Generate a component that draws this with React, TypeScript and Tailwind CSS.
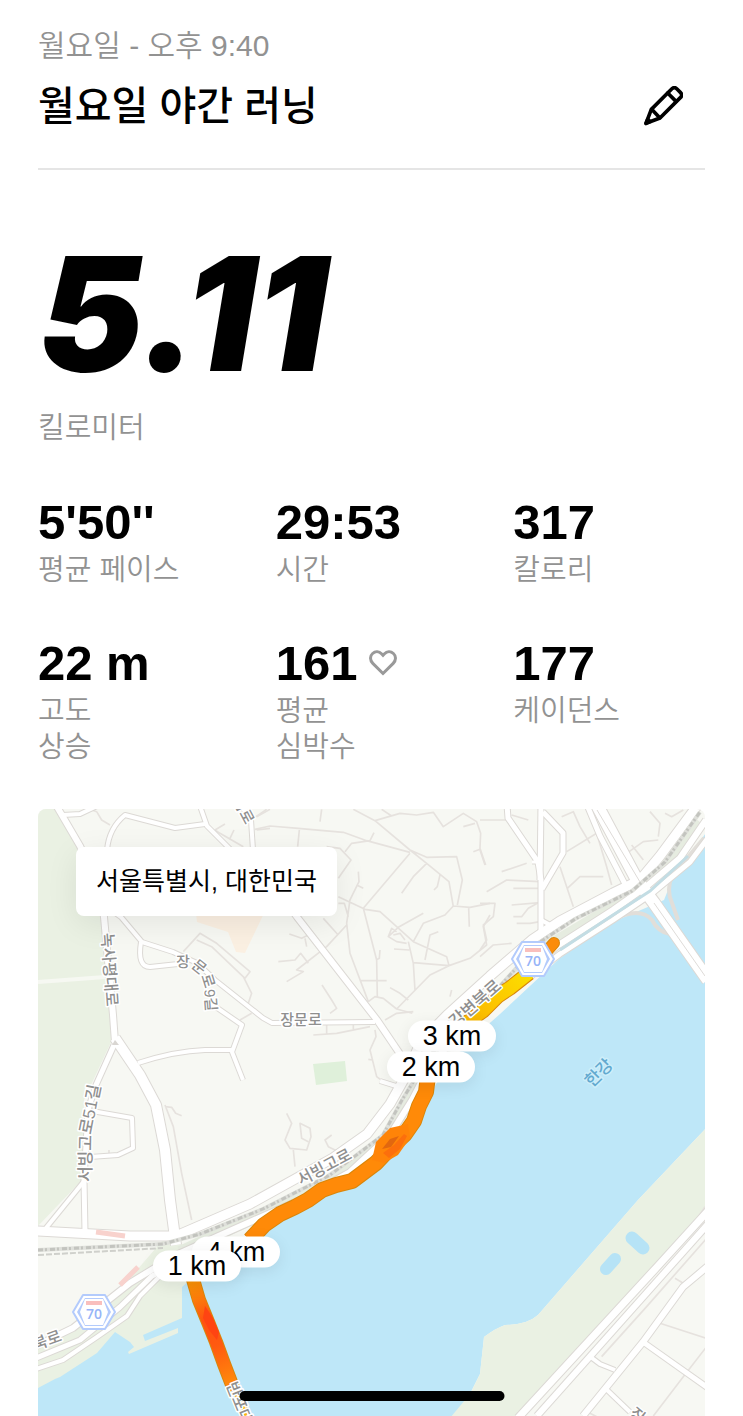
interface Stat {
  value: string;
  label: string[];
  heart?: boolean;
}

interface Road {
  d: string;
  w: number;
}

interface Pin {
  label: string;
  x: number;
  y: number;
}

const STATS: Stat[] = [
  { value: "5'50''", label: ["평균 페이스"] },
  { value: "29:53", label: ["시간"] },
  { value: "317", label: ["칼로리"] },
  { value: "22 m", label: ["고도", "상승"] },
  { value: "161", label: ["평균", "심박수"], heart: true },
  { value: "177", label: ["케이던스"] },
];

const MAP = { x: 38, y: 809, width: 667, height: 607 };

const PINS: Pin[] = [
  { label: "3 km", x: 452, y: 1036 },
  { label: "2 km", x: 431, y: 1067 },
  { label: "4 km", x: 236, y: 1252 },
  { label: "1 km", x: 197, y: 1266 },
];

const ROADS: Road[] = [
  { d: "M56 805 L80 846 L100 890 L104 917 L113 1015 L115 1042", w: 6 },
  { d: "M115 1038 L140 1075 L156 1105 L165 1150 L170 1200 L176 1245", w: 10 },
  { d: "M114 1045 L96 1085 L88 1110 L84 1180 L85 1232", w: 5 },
  { d: "M85 1180 L46 1228", w: 4 },
  { d: "M92 1111 L132 1118 L133 1148 L118 1155 L90 1157", w: 4 },
  { d: "M138 1063 Q175 1051 205 1050 L232 1050", w: 4 },
  { d: "M210 1003 L242 1025 L232 1052 L243 1080", w: 4 },
  { d: "M90 895 L121 917 L142 942 L173 952 L197 963 L215 980 L263 1018 L272 1023 L375 1022", w: 4 },
  { d: "M141 942 Q137 967 150 967 L178 964", w: 4 },
  { d: "M63 815 L80 814 L97 806", w: 4 },
  { d: "M107 850 Q109 828 125 815 L175 828 L205 824", w: 4 },
  { d: "M200 806 L207 826 L233 852", w: 4 },
  { d: "M241 806 L251 820 L253 850", w: 4 },
  { d: "M270 880 L297 917 L377 1020 L400 1054", w: 6 },
  { d: "M507 805 L508 818 L538 862 L541 880 L541 930", w: 5 },
  { d: "M541 805 L540 880", w: 5 },
  { d: "M543 812 L563 833 L563 853 L542 889", w: 5 },
  { d: "M532 862 L540 862", w: 3 },
  { d: "M541 920 L552 926", w: 4 },
  { d: "M380 1081 L396 1086", w: 4 },
  { d: "M587 805 L600 836 L625 884", w: 5 },
  { d: "M597 805 L637 880 L654 903 L708 980", w: 12 },
  { d: "M36 1231 L130 1236 L176 1236 L250 1204 L333 1158 L367 1134 L390 1104 L408 1072 L420 1043 L447 1015 L490 976 L533 939 L560 921 L613 893 L640 880 L660 856 L697 806", w: 9 },
  { d: "M36 1346 L73 1328 L130 1283 L176 1255 L250 1222 L300 1200 L350 1172 L390 1135 L412 1100 L430 1065 L465 1028 L500 996 L557 946 L613 910 L647 886 L680 858 L706 820", w: 6 },
  { d: "M36 1358 L80 1340 L120 1307 L152 1276 L200 1252", w: 5 },
  { d: "M36 1369 L63 1360 L97 1337 L127 1316 L140 1296 L160 1276", w: 4 },
  { d: "M530 977 L560 954 L613 920 L650 895 L690 862 L708 838", w: 5 },
  { d: "M708 1211 L657 1267 L518 1418", w: 7 },
  { d: "M708 1224 L537 1416", w: 6 },
  { d: "M708 1266 L683 1287 L643 1342 L583 1416", w: 6 },
  { d: "M643 1342 L708 1388", w: 5 },
  { d: "M605 1388 L630 1412", w: 4 },
  { d: "M592 1358 L600 1364 L615 1370", w: 4 },
];

const RAILWAY =
  "M38 1250 L163 1244 L200 1234 L263 1209 L330 1175 L383 1135 L402 1100 L430 1055 L500 986 L540 942 L575 919 L632 891 L665 862 L700 812";

/* Side streets, one group per map tile, three units to the pixel. */
const TILES = [
  {
    at: "translate(250 800) scale(0.3333)",
    d: "M15 88 L60 78 L145 85 L280 97 L350 122 L480 157 M0 62 L50 28 M148 90 L143 140 M210 65 L215 28 M310 28 L375 62 L480 150 L530 190 L597 245 L610 320 M375 62 L450 40 L500 45 L550 37 L580 80 L640 40 L680 65 L692 100 L690 145 L707 195 M670 155 L690 148 M640 80 L675 70 M395 28 L425 48 M360 122 L372 98 M230 140 L270 145 L303 180 L265 235 M285 155 L305 130 L360 122 M480 160 L340 325 M480 150 L530 172 L620 170 L637 240 L622 315 M530 190 L490 230 L455 280 M570 225 L562 260 L552 270 M325 215 L327 245 L300 300 L290 370 L300 460 L355 605 M320 255 L340 265 M265 290 L345 328 L390 335 L440 380 L490 425 L590 470 L597 497 L490 488 M265 310 L283 310 L295 350 M340 325 L380 480 L382 590 M610 318 L660 322 L720 310 M656 322 L658 380 M610 318 L585 345 L520 370 L490 425 M520 340 L445 382 L415 410 M440 395 L425 385 L415 410 L440 425 L470 430 M430 405 L450 400 L465 420 M475 425 L490 490 L495 570 M432 447 L478 450 M720 345 L700 380 L710 435 L660 475 L597 497 L540 525 L440 627 L400 595 L375 590 L355 605 M440 627 L487 640 M420 563 L450 580 L475 600 M330 542 L410 542 M378 480 L388 475 L390 450 M290 375 L230 440 L140 510 L160 515 L110 545 M85 485 L135 480 L152 460 L175 490 M118 402 L155 415 L175 405 M165 415 L170 440 M220 355 L262 402 M216 555 L245 600 L260 625 L240 640 M605 570 L600 590 M565 395 L540 405 L525 480",
  },
  {
    at: "translate(480 800) scale(0.3333)",
    d: "M0 60 L80 60 M20 275 L80 240 L180 245 M65 215 L140 190 M100 265 L180 265 M95 315 L180 308 M100 350 L125 350 L145 325 L180 305 M110 370 L150 370 L180 365 M0 310 L45 310 L40 350 L10 375 L20 420 L0 450 M95 45 L145 60 M245 50 L280 35 L300 80 L330 130 M260 155 L350 100 M240 200 L280 320 M262 265 L300 230 L370 230 M350 100 L380 200 L395 255 M510 35 L540 70 L535 110 M555 40 L575 50 L610 30 M380 50 L440 160 L490 125 L535 120 M455 135 L490 180 M0 470 L40 435 L95 430 M0 150 L15 195 M320 28 L350 90",
  },
  {
    at: "translate(30 800) scale(0.3333)",
    d: "M180 28 L200 35 L215 60 L240 75 M555 90 L570 100 L640 140 M555 90 L585 72 M600 115 L612 90 M680 50 L720 28 M680 90 L720 85 M460 455 L510 400 L560 430 L660 515 L645 535 L545 440 L500 420 M640 530 L665 580 L655 610",
  },
  {
    at: "translate(30 1010) scale(0.3333)",
    d: "M405 285 L430 350 L455 490 L485 630 M405 290 L425 292 L437 310 L455 317 M237 420 L237 435 M630 30 L665 10",
  },
  {
    at: "translate(250 1010) scale(0.3333)",
    d: "M110 310 L125 340 L105 390 L120 415 L170 420 L183 380 L180 355 L150 340 L155 385 L175 395 M130 420 L135 470 M245 375 L225 390 L235 410 L275 430 M190 75 L260 70 L360 50 M230 70 L230 40 M310 60 L310 45 M375 60 L378 80 L360 120 L380 200 L400 215 M355 148 L368 150 M405 30 L440 10 L490 5",
  },
  {
    at: "translate(370 1200) scale(0.3333)",
    d: "M1010 115 L830 320 L695 470 M915 235 L940 250 M870 370 L1010 415 M1010 440 L940 530 L850 648 M1005 20 L960 90 L880 170 M660 640 L700 660",
  },
];

const ROUTE = {
  tip: "M554 943 L546 952",
  upper: "M529 973 L510 988 L498 996 L483 1011 L462 1026",
  middle:
    "M428 1076 L426 1092 L419 1106 L414 1121 L405 1134 L393 1145 L376 1163 L364 1172 L352 1181 L336 1185 L322 1190 L308 1200 L295 1207 L280 1214 L264 1225 L250 1240",
  lower: "M192 1276 L199 1300 L208 1322 L216 1342 L224 1364 L234 1390",
};

function PencilIcon() {
  return (
    <svg viewBox="0 0 120 120" className="size-10" fill="none" stroke="#000" strokeWidth="11" strokeLinejoin="round" strokeLinecap="round" aria-hidden="true">
      <path d="M9 112 L25 70 L86 9 Q94 1 102 9 L112 19 Q120 27 112 35 L51 96 Z" />
      <path d="M74 21 L99 46 M26 70 L50 95" />
      <path d="M9 112 L14 100 L21 107 Z" fill="#000" />
    </svg>
  );
}

function HeartIcon() {
  return (
    <svg viewBox="0 0 28 26" className="h-[26px] w-7" fill="none" stroke="#999" strokeWidth="3" strokeLinejoin="miter" aria-hidden="true">
      <path d="M14 23.500 L3.800 13.400 C0.800 10.300 0.800 6 3.600 3.500 C6.400 1 10.200 1.500 12.500 3.800 L14 5.400 L15.500 3.800 C17.800 1.500 21.600 1 24.400 3.500 C27.200 6 27.200 10.300 24.200 13.400 Z" />
    </svg>
  );
}

function Shield({ x, y }: { x: number; y: number }) {
  return (
    <g transform={`translate(${x} ${y})`}>
      <path d="M-11 -17 H11 L21 0 L11 17 H-11 L-21 0 Z" fill="#fff" stroke="#b3cbfc" strokeWidth="2" strokeLinejoin="round" />
      <path d="M-9 -14 H9 L17 0 L9 14 H-9 L-17 0 Z" fill="#b3cbfc" />
      <path d="M-9 -13 H9 L14 0 L9 13 H-9 L-14 0 Z" fill="#fff" />
      <rect x="-8" y="-11" width="16" height="4" fill="#f9bfbd" />
      <text y="7" textAnchor="middle" fontSize="14" fill="#96b4f7" className="font-['Open_Sans',sans-serif] font-semibold">
        70
      </text>
    </g>
  );
}

function RunMap() {
  return (
    <svg
      viewBox={`${MAP.x} ${MAP.y} ${MAP.width} ${MAP.height}`}
      className="block h-auto w-full"
      role="img"
      aria-label="러닝 경로 지도"
    >
      <defs>
        <linearGradient id="upper" gradientUnits="userSpaceOnUse" x1="530" y1="970" x2="455" y2="1035">
          <stop offset="0" stopColor="#fbe000" />
          <stop offset="0.5" stopColor="#fdc500" />
          <stop offset="1" stopColor="#f5ac00" />
        </linearGradient>
        <linearGradient id="lower" gradientUnits="userSpaceOnUse" x1="188" y1="1275" x2="246" y2="1416">
          <stop offset="0" stopColor="#f79a05" />
          <stop offset="0.15" stopColor="#fb7f0a" />
          <stop offset="0.32" stopColor="#ff5210" />
          <stop offset="0.5" stopColor="#ff5a10" />
          <stop offset="0.75" stopColor="#ff870b" />
          <stop offset="1" stopColor="#fbb50a" />
        </linearGradient>
        <path id="alley" d="M176 968 Q199 963 204 986 L206 1012" />
        <path id="lane" d="M91 1182 L92 1130 L101 1084" />
      </defs>

      <rect x="38" y="809" width="667" height="607" fill="#f7f8f3" />
      <path d="M38 809 H56 L80 848 L100 890 L109 1010 L112 1040 L84 1100 L82 1180 L38 1226 Z" fill="#eaf1e3" />
      <path d="M38 982 L105 977" stroke="#f6f8f2" strokeWidth="4" />
      <path d="M195 905 H268 L256 930 L245 953 L236 952 L228 932 L197 922 Z" fill="#fbf0e2" />
      <path d="M313 1064 L345 1061 L347 1081 L316 1085 Z" fill="#dff0da" />

      <path
        d="M708 830 L672 880 L664 900 L613 922 L560 958 L500 1014 L465 1045 L436 1084 L424 1108 L396 1146 L350 1184 L300 1208 L240 1242 L188 1276 L30 1350 V1420 H452 L470 1394 L480 1374 L484 1337 Q496 1328 505 1325 Q527 1325 538 1315 L638 1200 L708 1126 Z"
        fill="#bee7f8"
      />
      <path
        d="M36 1389 L55 1379 L60 1377 L97 1353 L115 1332 L130 1342 L134 1347 L128 1352 L129 1354 L178 1333 V1328 L145 1341 L143 1335 L182 1318 V1287 L190 1280 L165 1262 L120 1290 L36 1340 Z"
        fill="#eaf1e3"
      />
      <path d="M38 1340 L70 1326 L130 1278 L163 1240 L38 1258 Z" fill="#f7f8f3" />
      <path d="M130 1278 L163 1240 L185 1245 L165 1265 Z" fill="#eaf1e3" />
      <path d="M708 1126 L638 1200 L538 1315 Q527 1325 505 1325 Q496 1328 484 1337 L480 1374 L470 1394 L450 1418 H520 L708 1208 Z" fill="#eaf1e3" />
      <path d="M632 1238 L643 1248" stroke="#b6e3f6" strokeWidth="13" strokeLinecap="round" />
      <path d="M615 1259 L606 1269" stroke="#b6e3f6" strokeWidth="12" strokeLinecap="round" />

      <path d="M180 1252 L263 1214 L330 1180 L383 1143 L402 1112 L430 1064 L500 992 L545 948 L632 896 L665 866 L700 822" fill="none" stroke="#e6ece0" strokeWidth="12" />
      <path d="M704 838 L672 876 Q666 890 672 903 L678 920 M612 920 Q640 906 652 920 Q658 932 670 934" fill="none" stroke="#e1ded9" strokeWidth="4" />

      {TILES.map((tile) => (
        <path key={tile.at} transform={tile.at} d={tile.d} fill="none" stroke="#e6e2de" strokeWidth="5" strokeLinejoin="round" />
      ))}

      <g fill="none" stroke="#dcd9d5" strokeLinejoin="round">
        {ROADS.map((road) => (
          <path key={road.d} d={road.d} strokeWidth={road.w + 2} />
        ))}
      </g>
      <g fill="none" stroke="#fff" strokeLinejoin="round">
        {ROADS.map((road) => (
          <path key={road.d} d={road.d} strokeWidth={road.w} />
        ))}
      </g>
      <path d="M597 810 L640 882 M654 903 L705 976" stroke="#dedbd8" fill="none" />
      <path d="M115 1040 L112 1045 H119 Z" fill="#d9d6d2" />
      <path d="M560 950 L613 915 L650 891 L688 856" fill="none" stroke="#c3dde4" strokeWidth="3" />

      <path d={RAILWAY} fill="none" stroke="#dfe0db" strokeWidth="4" />
      <path d={RAILWAY} fill="none" stroke="#c3c4bf" strokeWidth="3" strokeDasharray="5 2 2 3" />
      <path d="M38 1255 L163 1248" stroke="#cfd0cb" strokeWidth="2" strokeDasharray="6 2" />
      <path d="M96 1232 L125 1236 M120 1285 L138 1267" stroke="#f8d2cd" strokeWidth="5" />

      <g fill="none" strokeLinejoin="round">
        <g stroke="#d9860a">
          <path d={ROUTE.tip} strokeWidth="12" strokeLinecap="round" />
          <path d={ROUTE.upper} strokeWidth="15" />
          <path d={ROUTE.middle} strokeWidth="16" />
          <path d={ROUTE.lower} strokeWidth="14" />
        </g>
        <path d={ROUTE.tip} stroke="#fb8c0a" strokeWidth="10" strokeLinecap="round" />
        <path d={ROUTE.upper} stroke="url(#upper)" strokeWidth="13" />
        <path d={ROUTE.middle} stroke="#ff8a08" strokeWidth="14" />
        <path d={ROUTE.lower} stroke="url(#lower)" strokeWidth="12" />
        <path d="M234 1388 L249 1418" stroke="#fbb50a" strokeWidth="6" />
      </g>
      <path d="M390 1128 L408 1124 L410 1138 L398 1155 L384 1163 L372 1160 L376 1142 Z" fill="#ff8408" />
      <path d="M399 1136 L390 1139 L382 1149 L391 1147 Z" fill="#e2670f" />
      <path d="M383 1153 L394 1145 L404 1134 L407 1136 L400 1149 L389 1158 Z" fill="#fc6f0c" />
      <path d="M205 1306 L213 1318 L219 1332 L217 1340 L209 1330 L203 1318 Z" fill="#ff4412" />

      <g
        fontSize="16"
        fill="#8f8f8f"
        stroke="#fff"
        strokeWidth="3"
        strokeLinejoin="round"
        paintOrder="stroke"
        textAnchor="middle"
        className="font-['Liberation_Sans','Noto_Sans_CJK_KR',sans-serif] font-medium"
      >
        <text transform="translate(104 970) rotate(86)">녹사평대로</text>
        <text transform="translate(301 1025)" fontSize="15">장문로</text>
        <text transform="translate(327 1172) rotate(-28)">서빙고로</text>
        <text transform="translate(479 1008) rotate(-41)" fontSize="17">강변북로</text>
        <text transform="translate(42 1348) rotate(-20)">변북로</text>
        <text transform="translate(237 1412) rotate(68)">반포대교</text>
        <text transform="translate(239 813) rotate(62)" fontSize="15">남로</text>
        <text transform="translate(634 1420) rotate(40)">장</text>
        <text textAnchor="start" fontSize="15">
          <textPath href="#alley">장문로9길</textPath>
        </text>
        <text textAnchor="start" fontSize="17">
          <textPath href="#lane">서빙고로51길</textPath>
        </text>
        <text transform="translate(603 1077) rotate(-45)" fontSize="17" fill="#62a9cf" stroke="#cdeefa">
          한강
        </text>
      </g>

      <Shield x={533} y={959} />
      <Shield x={94} y={1312} />
    </svg>
  );
}

function KmPin({ pin }: { pin: Pin }) {
  return (
    <span
      className="absolute flex h-[31px] w-[88px] -translate-x-1/2 -translate-y-1/2 items-center justify-center rounded-full bg-white text-[27px] leading-none text-black shadow-[0_4px_16px_rgba(0,0,0,0.08)]"
      style={{
        left: `${((pin.x - MAP.x) / MAP.width) * 100}%`,
        top: `${((pin.y - MAP.y) / MAP.height) * 100}%`,
      }}
    >
      {pin.label}
    </span>
  );
}

export default function App() {
  return (
    <main className="min-h-screen bg-white px-[38px] font-['Liberation_Sans','Noto_Sans_CJK_KR',sans-serif] text-black">
      <header className="border-b-2 border-[#e5e5e5] pt-7 pb-[38px]">
        <p className="text-[30px] leading-9 font-[350] text-[#929292]">월요일 - 오후 9:40</p>
        <div className="mt-[18px] flex items-center justify-between">
          <h1 className="text-[40px] leading-[48px] font-medium">월요일 야간 러닝</h1>
          <button type="button" aria-label="이름 편집" className="mr-[22px]">
            <PencilIcon />
          </button>
        </div>
      </header>

      <section className="mt-[84px]">
        <p className="font-['Inter',sans-serif] text-[158px] leading-[120px] font-black italic">5.11</p>
        <p className="mt-9 text-[29px] leading-9 font-[350] text-[#929292]">킬로미터</p>
      </section>

      <dl className="mt-[52px] grid grid-cols-3 gap-x-[46px] gap-y-[51px]">
        {STATS.map((stat) => (
          <div key={stat.value} className="flex flex-col gap-1.5">
            <dd className="flex items-center gap-3 text-[49px] leading-[48px] font-bold">
              {stat.value}
              {stat.heart && <HeartIcon />}
            </dd>
            <dt className="order-last text-[29px] leading-9 font-[350] text-[#929292]">
              {stat.label.map((line) => (
                <span key={line} className="block">
                  {line}
                </span>
              ))}
            </dt>
          </div>
        ))}
      </dl>

      <section className="relative mt-11 overflow-hidden rounded-t-lg">
        <RunMap />
        <p className="absolute top-[38px] left-[38px] rounded-lg bg-white px-5 text-[25px] leading-[69px] shadow-[0_8px_32px_rgba(0,0,0,0.08)]">
          서울특별시, 대한민국
        </p>
        {PINS.map((pin) => (
          <KmPin key={pin.label} pin={pin} />
        ))}
      </section>

      <div className="fixed bottom-[15px] left-1/2 h-[10px] w-[265px] -translate-x-1/2 rounded-full bg-black" />
    </main>
  );
}
